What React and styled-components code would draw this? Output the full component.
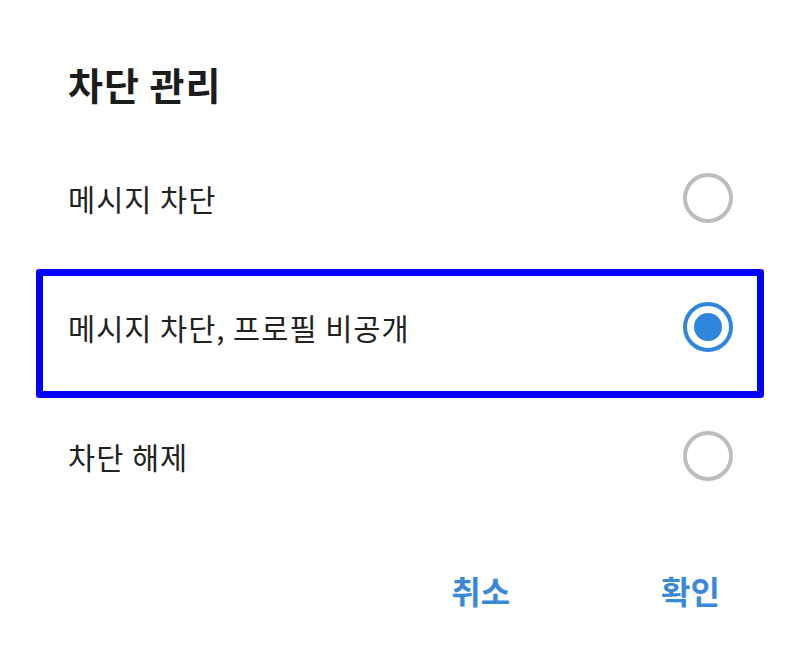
import React, { useState } from "react";
import styled, { createGlobalStyle } from "styled-components";

const Global = createGlobalStyle`
  html, body { margin: 0; padding: 0; background: #ffffff; }
  body { font-family: "Noto Sans CJK KR", "Noto Sans", sans-serif; }
`;

const Dialog = styled.div`
  width: 800px;
  height: 652px;
  box-sizing: border-box;
  padding: 0 36px;
  display: flex;
  flex-direction: column;
  background: #fff;
`;

const Title = styled.h1`
  margin: 0;
  height: 140px;
  box-sizing: border-box;
  padding: 63px 0 0 32px;
  font-size: 38px;
  line-height: 42px;
  font-weight: 700;
  letter-spacing: 1px;
  color: #1c1c1c;
`;

const Options = styled.div`
  display: flex;
  flex-direction: column;
`;

const Row = styled.label`
  height: 129px;
  box-sizing: border-box;
  border: 7px solid ${(p) => (p.$selected ? "#0000ff" : "transparent")};
  border-radius: 3px;
  padding: 0 24px 13px 25px;
  display: flex;
  align-items: center;
  justify-content: space-between;
  cursor: pointer;
`;

const Label = styled.span`
  font-size: 29.5px;
  line-height: 36px;
  color: #222;
  letter-spacing: 1px;
`;

const Radio = styled.span`
  width: 50px;
  height: 50px;
  box-sizing: border-box;
  border-radius: 50%;
  border: 4px solid ${(p) => (p.$checked ? "#2f86dd" : "#bdbdbd")};
  display: flex;
  align-items: center;
  justify-content: center;
  &::after {
    content: "";
    width: 28px;
    height: 28px;
    border-radius: 50%;
    background: #2f86dd;
    display: ${(p) => (p.$checked ? "block" : "none")};
  }
`;

const Actions = styled.div`
  display: flex;
  justify-content: flex-end;
  align-items: center;
  gap: 151px;
  padding: 43px 44px 0 0;
`;

const ActionButton = styled.button`
  border: none;
  background: none;
  padding: 0;
  font-family: inherit;
  font-size: 32px;
  line-height: 40px;
  font-weight: 700;
  color: #3a88d8;
  cursor: pointer;
`;

const options = ["메시지 차단", "메시지 차단, 프로필 비공개", "차단 해제"];

export default function App() {
  const [selected, setSelected] = useState(1);
  return (
    <>
      <Global />
      <Dialog>
        <Title>차단 관리</Title>
        <Options>
          {options.map((o, i) => (
            <Row key={o} $selected={i === selected} onClick={() => setSelected(i)}>
              <Label>{o}</Label>
              <Radio $checked={i === selected} />
            </Row>
          ))}
        </Options>
        <Actions>
          <ActionButton>취소</ActionButton>
          <ActionButton>확인</ActionButton>
        </Actions>
      </Dialog>
    </>
  );
}
